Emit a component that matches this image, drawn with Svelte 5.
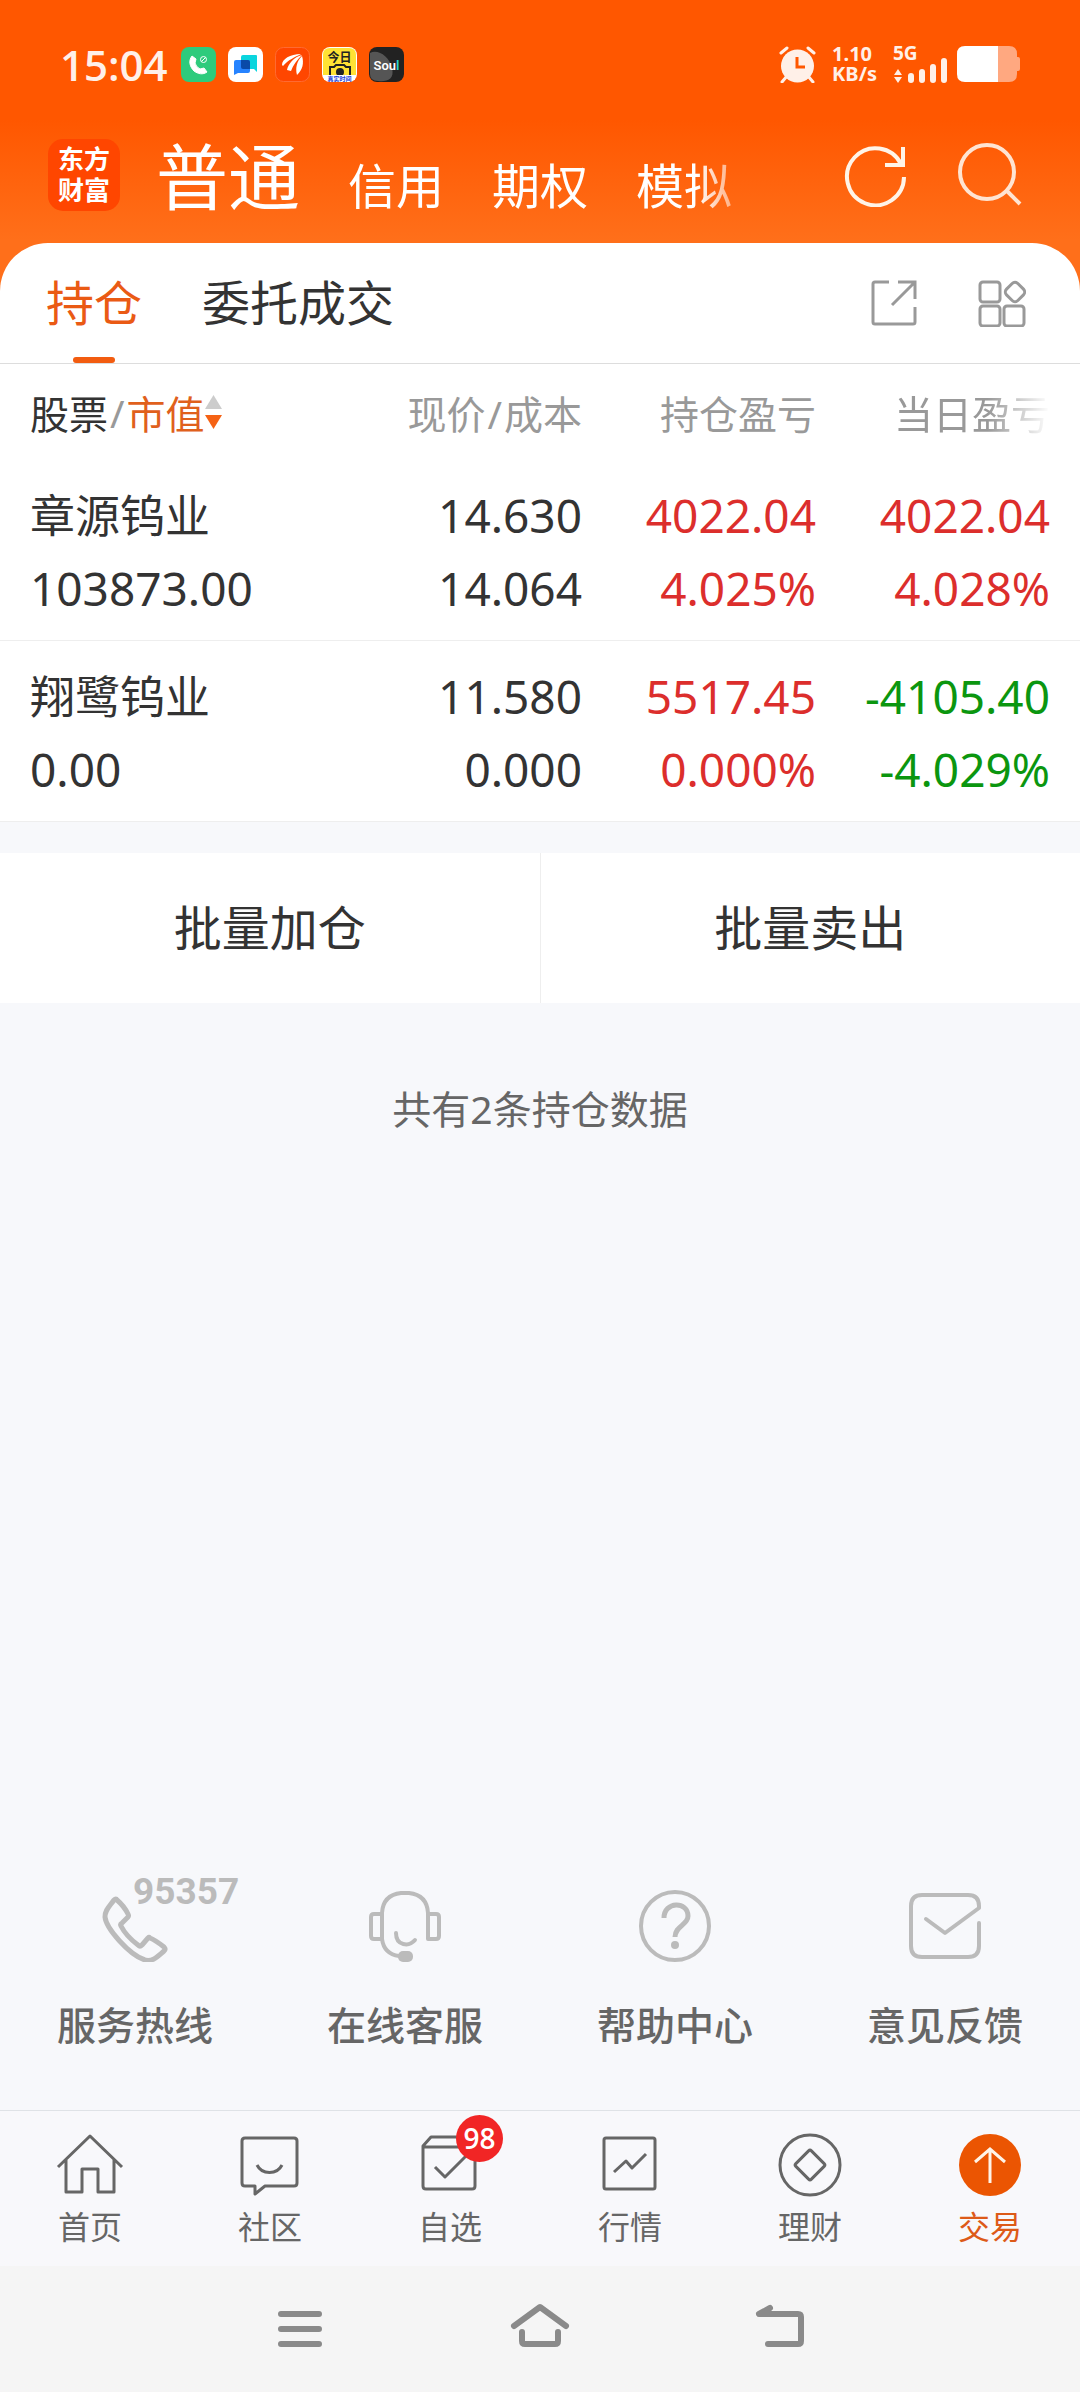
<script lang="ts">
  interface Holding {
    name: string;
    value: string;
    price: string;
    cost: string;
    profit: string;
    profitRate: string;
    dayProfit: string;
    dayRate: string;
  }

  const accounts = ["普通", "信用", "期权", "模拟"];
  const views = ["持仓", "委托成交"];

  const holdings: Holding[] = [
    {
      name: "章源钨业",
      value: "103873.00",
      price: "14.630",
      cost: "14.064",
      profit: "4022.04",
      profitRate: "4.025%",
      dayProfit: "4022.04",
      dayRate: "4.028%",
    },
    {
      name: "翔鹭钨业",
      value: "0.00",
      price: "11.580",
      cost: "0.000",
      profit: "5517.45",
      profitRate: "0.000%",
      dayProfit: "-4105.40",
      dayRate: "-4.029%",
    },
  ];

  const services = [
    { id: "phone", label: "服务热线" },
    { id: "agent", label: "在线客服" },
    { id: "help", label: "帮助中心" },
    { id: "mail", label: "意见反馈" },
  ];

  const tabs = [
    { id: "home", label: "首页", badge: 0 },
    { id: "community", label: "社区", badge: 0 },
    { id: "watchlist", label: "自选", badge: 98 },
    { id: "market", label: "行情", badge: 0 },
    { id: "wealth", label: "理财", badge: 0 },
    { id: "trade", label: "交易", badge: 0 },
  ];

  let account = $state("普通");
  let view = $state("持仓");
  let currentTab = $state("trade");
  let descending = $state(true);

  let sortedHoldings = $derived(
    [...holdings].sort((a, b) =>
      descending ? Number(b.value) - Number(a.value) : Number(a.value) - Number(b.value)
    )
  );

  function isLoss(amount: string) {
    return amount.startsWith("-");
  }
</script>

<div class="page">
  <header class="top">
    <div class="status">
      <time class="clock">15:04</time>
      <div class="apps">
        <svg viewBox="0 0 35 35" aria-hidden="true">
          <rect width="35" height="35" rx="8" fill="#2dcb7c" />
          <path d="M11 9c-4 5-2 11 2 15 4 3 9 4 13 1l-3-4-4 1q-4-2-5-6l1-4z" fill="#fff" stroke="#fff" stroke-linejoin="round" />
          <circle cx="22.500" cy="12.500" r="3" fill="none" stroke="#fff" />
          <path d="M20.500 14.500l4-4" stroke="#fff" />
        </svg>
        <svg viewBox="0 0 35 35" aria-hidden="true">
          <rect width="35" height="35" rx="8" fill="#fff" />
          <path d="M15 8h13q1 0 1 1v16l-3-3H15q-2 0-2-2V10q0-2 2-2z" fill="#0bd5de" />
          <path d="M8 13h12q2 0 2 2v9q0 2-2 2H10l-4 2V15q0-2 2-2z" fill="#2683ff" />
          <path d="M13 13h7q2 0 2 2v7h-7q-2 0-2-2z" fill="#0a4aa8" />
        </svg>
        <svg viewBox="0 0 35 35" aria-hidden="true">
          <rect x=".5" y=".5" width="34" height="34" rx="8" fill="#ff4600" stroke="#ff6a32" />
          <path d="M7 18C7 12 15 7 26 7 20 10 13 13 8 19z" fill="#fff" />
          <path d="M12 23c1-6 7-13 15-15-5 5-9 10-11 16z" fill="#fff" />
          <path d="M22 28c-2-7 0-14 5-19 2 7 1 13-5 19z" fill="#fff" />
        </svg>
        <svg viewBox="0 0 35 35" aria-hidden="true">
          <rect width="35" height="35" rx="8" fill="#fff" />
          <path d="M8 1h19q7 0 7 7v20H1V8q0-7 7-7z" fill="#ffe234" />
          <path d="M8 28v-8h4l2-2h8l2 2h4v8" fill="none" stroke="#222" stroke-width="2" />
          <circle cx="18" cy="25" r="4" fill="#222" />
          <text x="17.500" y="15" text-anchor="middle" font-size="12" font-weight="700" fill="#222">今日</text>
          <path d="M2 28h31v5H2z" fill="#fff" />
          <text x="17.500" y="34" text-anchor="middle" font-size="6" font-weight="700" fill="#1740d8">真实时间</text>
        </svg>
        <svg viewBox="0 0 35 35" aria-hidden="true">
          <rect width="35" height="35" rx="8" fill="#222" />
          <path d="M1 6C9 2 20 9 23 21s-6 14-14 13Q1 34 1 27z" fill="#555" />
          <text class="soul" x="17.500" y="23" text-anchor="middle" font-size="13" font-weight="600" fill="#fff">Sou<tspan fill="#25d4d0">l</tspan></text>
        </svg>
      </div>
      <svg class="alarm" viewBox="0 0 37 37" aria-hidden="true">
        <path d="M2 7l6-5M35 7l-6-5M8 30l-5 6M29 30l5 6" stroke="#fff0e8" stroke-width="3" stroke-linecap="round" />
        <circle cx="18.500" cy="20" r="16.500" fill="#fff0e8" />
        <path d="M18 11v10h8" fill="none" stroke="#ff5700" stroke-width="3" />
      </svg>
      <span class="speed">1.10<br />KB/s</span>
      <svg class="signal" viewBox="0 -8 54 53" aria-hidden="true">
        <text x="0" y="14" font-size="19" font-weight="700" fill="#fff0e8">5G</text>
        <path d="M5 23l4 6H1zM5 37l-4-6h8z" fill="#fff0e8" />
        <path d="M18 30v4M29 26v8M40 21v13M51 15v19" stroke="#fff0e8" stroke-width="6" stroke-linecap="round" />
      </svg>
      <svg class="battery" viewBox="0 0 63 36" aria-hidden="true">
        <path d="M40 0h12q8 0 8 8v3h1q2 0 2 2v10q0 2-2 2h-1v3q0 8-8 8H40z" fill="#ffa880" />
        <path d="M8 0h33v36H8q-8 0-8-8V8q0-8 8-8z" fill="#fff" />
      </svg>
    </div>

    <div class="titlebar">
      <span class="logo">东方<br />财富</span>
      <nav class="accounts">
        {#each accounts as name}
          <button class:current={name === account} onclick={() => (account = name)}>{name}</button>
        {/each}
      </nav>
      <button class="tool" aria-label="刷新">
        <svg viewBox="0 0 64 64" fill="none" stroke="#fff4e8" stroke-width="4">
          <path d="M60 34A28.500 28.500 0 1 1 57 21" />
          <path d="M59 4v18H41" />
        </svg>
      </button>
      <button class="tool" aria-label="搜索">
        <svg viewBox="0 0 64 64" fill="none" stroke="#ffe4d2" stroke-width="4">
          <circle cx="29" cy="29" r="27" />
          <path d="M48 47l14 14" />
        </svg>
      </button>
    </div>
  </header>

  <main>
    <section class="card">
      <div class="views">
        {#each views as name}
          <button class="view" class:current={name === view} onclick={() => (view = name)}>{name}</button>
        {/each}
        <button class="action" aria-label="分享">
          <svg viewBox="0 0 48 48" fill="none" stroke="#999" stroke-width="3">
            <path d="M19 3H5Q3 3 3 5v38q0 2 2 2h38q2 0 2-2V28" />
            <path d="M28 3h17v17M45 3L22 26" />
          </svg>
        </button>
        <button class="action" aria-label="更多功能">
          <svg viewBox="0 0 48 48" fill="none" stroke="#999" stroke-width="3">
            <rect x="2" y="3" width="20" height="20" rx="3" />
            <rect x="2" y="27" width="20" height="20" rx="3" />
            <rect x="26" y="27" width="20" height="20" rx="3" />
            <rect x="29" y="5" width="16" height="16" rx="4" transform="rotate(45 37 13)" />
          </svg>
        </button>
      </div>

      <table>
        <thead>
          <tr>
            <th class="first">
              <button class="sort" onclick={() => (descending = !descending)}>
                <span class="stock">股票</span><span class="slash">/</span><span class="value">市值</span>
                <svg viewBox="0 0 17 34" aria-hidden="true">
                  <path d="M8.500 0L17 14H0z" fill={descending ? "#ccc" : "#f56214"} />
                  <path d="M8.500 34L0 20h17z" fill={descending ? "#f56214" : "#ccc"} />
                </svg>
              </button>
            </th>
            <th>现价<span class="slash">/</span>成本</th>
            <th>持仓盈亏</th>
            <th class="last"><span class="fade">当日盈亏</span></th>
          </tr>
        </thead>
        <tbody>
          {#each sortedHoldings as item}
            <tr>
              <td class="first"><span class="name">{item.name}</span><br />{item.value}</td>
              <td>{item.price}<br />{item.cost}</td>
              <td class="gain" class:loss={isLoss(item.profit)}>{item.profit}<br />{item.profitRate}</td>
              <td class="last gain" class:loss={isLoss(item.dayProfit)}>{item.dayProfit}<br />{item.dayRate}</td>
            </tr>
          {/each}
        </tbody>
      </table>
    </section>

    <div class="batch">
      <button>批量加仓</button>
      <button>批量卖出</button>
    </div>

    <p class="summary">共有{holdings.length}条持仓数据</p>

    <div class="services">
      {#each services as service}
        <a href="#{service.id}">
          <span class="icon">
            <svg viewBox="0 0 72 72" fill="none" stroke="#bbb" stroke-width="5" stroke-linecap="round" stroke-linejoin="round" aria-hidden="true">
              {#if service.id === "phone"}
                <path d="M15 10C10 17 6 20 6 27c1 11 24 38 40 43 8 2 13-4 19-9q2-2 0-4c-5-4-9-7-14-9q-1-1-2 0l-6 7q-2 2-4 0Q27 46 22 36q-1-2 1-3l6-6q1-1 0-3-4-8-11-14-1-2-3 0z" />
              {:else if service.id === "agent"}
                <path d="M13 49V23Q14 5 32 3h8q18 2 19 20v26h8q3 0 3-3V27q0-3-3-3h-8M13 24H5q-3 0-3 3v19q0 3 3 3h8q2 15 17 17" stroke-width="4" />
                <path d="M27 43c0 13 13 14 19 7" stroke-width="4" />
                <rect x="29" y="61" width="15" height="11" rx="5" fill="#bbb" stroke="none" />
              {:else if service.id === "help"}
                <circle cx="36" cy="36" r="34" stroke-width="4" />
                <path d="M25 28c0-17 24-17 24-2 0 9-13 10-13 21" stroke-linecap="butt" />
                <circle cx="36" cy="55" r="4" fill="#bbb" stroke="none" />
              {:else}
                <path d="M17 29l19 14 34-25v-2Q70 5 59 5H13Q2 5 2 16v40q0 11 11 11h46q11 0 11-11V33" stroke-width="4" />
              {/if}
            </svg>
            {#if service.id === "phone"}
              <span class="hotline">95357</span>
            {/if}
          </span>
          {service.label}
        </a>
      {/each}
    </div>
  </main>

  <nav class="tabbar">
    {#each tabs as tab}
      <button class:current={tab.id === currentTab} onclick={() => (currentTab = tab.id)}>
        <span class="icon">
          <svg viewBox="0 0 72 72" fill="none" stroke="#666" stroke-width="3" stroke-linejoin="round" aria-hidden="true">
            {#if tab.id === "home"}
              <path d="M4 38L36 7l32 31M12 31v32h16V40h16v23h16V31" />
            {:else if tab.id === "community"}
              <path d="M11 9h49q3 0 3 3v42q0 3-3 3H31l-10 8v-8H11q-3 0-3-3V12q0-3 3-3z" />
              <path d="M23 36c5 10 20 10 25 0" />
            {:else if tab.id === "watchlist"}
              <path d="M9 18h52v39q0 3-3 3H12q-3 0-3-3V17l8-9h36l8 9v1" />
              <path d="M21 38l10 10 23-23" />
            {:else if tab.id === "market"}
              <rect x="10" y="9" width="51" height="51" rx="2" />
              <path d="M20 43l12-11 6 7 14-14" />
            {:else if tab.id === "wealth"}
              <circle cx="36" cy="36" r="30" />
              <rect x="25" y="25" width="22" height="22" rx="2" transform="rotate(45 36 36)" />
            {:else}
              <circle cx="36" cy="36" r="31" fill="#eb5502" stroke="none" />
              <path d="M36 20v34M21 33l15-13 15 13" stroke="#fff4e8" stroke-linejoin="miter" />
            {/if}
          </svg>
          {#if tab.badge}
            <span class="badge">{tab.badge}</span>
          {/if}
        </span>
        {tab.label}
      </button>
    {/each}
  </nav>

  <div class="system">
    <button aria-label="最近任务">
      <svg viewBox="0 0 60 60"><path d="M11 16h38M11 31h38M11 46h38" /></svg>
    </button>
    <button aria-label="主屏幕">
      <svg viewBox="0 0 60 60"><path d="M4 28L30 9l26 19M12 34v9q0 3 3 3h30q3 0 3-3v-9" /></svg>
    </button>
    <button aria-label="返回">
      <svg viewBox="0 0 60 60"><path d="M20 10L9 16h39q3 0 3 3v24q0 3-3 3H18" /></svg>
    </button>
  </div>
</div>

<style>
  :global(body) {
    margin: 0;
  }

  .page {
    display: flex;
    flex-direction: column;
    min-height: 100vh;
    background: #f7f8fb;
    color: #333;
    font-family: "Noto Sans", "Noto Sans CJK SC", sans-serif;
  }

  button {
    padding: 0;
    border: 0;
    background: none;
    color: inherit;
    font: inherit;
    cursor: pointer;
  }

  svg {
    display: block;
    flex: none;
  }

  .top {
    /* runs on behind the rounded corners of the card */
    margin-bottom: -48px;
    padding-bottom: 48px;
    background: linear-gradient(#ff5700 120px, #ff6f1a 240px);
    color: #fff;
  }

  .status {
    display: flex;
    align-items: center;
    height: 128px;
    padding: 0 60px;
  }

  .clock {
    color: #fff0e8;
    font-family: "Open Sans", sans-serif;
    font-size: 42px;
    font-weight: 600;
  }

  .apps {
    display: flex;
    flex: 1;
    gap: 12px;
    margin-left: 13px;
  }

  .apps svg {
    width: 35px;
    height: 35px;
  }

  .soul {
    font-family: Roboto, sans-serif;
  }

  .alarm {
    width: 37px;
    height: 37px;
  }

  .speed {
    margin: 0 16px;
    color: #fff0e8;
    font-size: 20px;
    font-weight: 700;
    line-height: 20px;
  }

  .signal {
    width: 54px;
    height: 53px;
  }

  .battery {
    width: 63px;
    height: 36px;
    margin-left: 10px;
  }

  .titlebar {
    display: flex;
    align-items: center;
    height: 94px;
    padding: 0 58px 21px 48px;
  }

  .logo {
    width: 72px;
    padding: 5px 0;
    border-radius: 15px;
    background: #ff4600;
    font-size: 26px;
    font-weight: 700;
    line-height: 31px;
    text-align: center;
  }

  .accounts {
    display: flex;
    flex: 1;
    align-items: baseline;
    gap: 48px;
    margin-left: 36px;
    padding-top: 12px;
    -webkit-mask-image: linear-gradient(90deg, #000 540px, transparent 610px);
    mask-image: linear-gradient(90deg, #000 540px, transparent 610px);
  }

  .accounts button {
    font-size: 48px;
    line-height: 96px;
  }

  .accounts button.current {
    font-size: 72px;
  }

  .tool {
    margin-left: 50px;
  }

  .tool svg {
    width: 64px;
    height: 64px;
  }

  main {
    display: flex;
    flex: 1;
    flex-direction: column;
  }

  .card {
    border-radius: 48px 48px 0 0;
    background: #fff;
  }

  .views {
    display: flex;
    align-items: center;
    gap: 60px;
    height: 120px;
    padding: 0 54px 0 46px;
    border-bottom: 1px solid #ddd;
  }

  .view {
    position: relative;
    font-size: 48px;
    line-height: 120px;
  }

  .view.current {
    color: #ea5a14;
  }

  .view.current::after {
    position: absolute;
    bottom: 0;
    left: 50%;
    width: 42px;
    height: 6px;
    margin-left: -21px;
    border-radius: 3px;
    background: #f25c10;
    content: "";
  }

  .action svg {
    width: 48px;
    height: 48px;
  }

  .view + .action {
    margin-left: auto;
  }

  table {
    width: 100%;
    border-collapse: collapse;
    table-layout: fixed;
  }

  th {
    width: 234px;
    height: 96px;
    padding: 0;
    color: #999;
    font-size: 39px;
    font-weight: 400;
    text-align: right;
  }

  td {
    padding: 19px 0 15px;
    border-bottom: 1px solid #eee;
    font-size: 46px;
    line-height: 73px;
    text-align: right;
  }

  .first {
    width: auto;
    padding-left: 30px;
    text-align: left;
  }

  .last {
    padding-right: 30px;
  }

  .name {
    font-size: 45px;
  }

  .gain {
    color: #dc2e2c;
  }

  .loss {
    color: #0b960f;
  }

  .sort {
    display: flex;
    align-items: center;
  }

  .sort svg {
    width: 17px;
    height: 34px;
  }

  .slash {
    padding: 0 2px;
  }

  .stock {
    color: #333;
  }

  .value {
    color: #e0601c;
  }

  .fade {
    -webkit-mask-image: linear-gradient(90deg, #000 60%, transparent);
    mask-image: linear-gradient(90deg, #000 60%, transparent);
  }

  .batch {
    display: flex;
    margin-top: 31px;
    background: #fff;
  }

  .batch button {
    flex: 1;
    font-size: 48px;
    line-height: 150px;
  }

  .batch button + button {
    border-left: 1px solid #eee;
  }

  .summary {
    margin: 77px 0;
    color: #666;
    font-size: 39px;
    line-height: 58px;
    text-align: center;
  }

  .services {
    display: grid;
    grid-template-columns: repeat(4, 1fr);
    margin-top: auto;
    padding-bottom: 55px;
  }

  .services a {
    display: flex;
    flex-direction: column;
    align-items: center;
    gap: 33px;
    color: #666;
    font-size: 39px;
    font-weight: 500;
    line-height: 60px;
    text-decoration: none;
  }

  .icon {
    position: relative;
  }

  .icon svg {
    width: 72px;
    height: 72px;
  }

  .hotline {
    position: absolute;
    top: -20px;
    left: 34px;
    color: #bbb;
    font-family: Roboto, sans-serif;
    font-size: 37px;
    font-weight: 700;
    line-height: 44px;
  }

  .tabbar {
    display: grid;
    grid-template-columns: repeat(6, 1fr);
    border-top: 1px solid #dfe2e6;
    background: #f8f8fb;
  }

  .tabbar button {
    display: flex;
    flex-direction: column;
    align-items: center;
    gap: 2px;
    padding: 18px 0 15px;
    color: #666;
    font-size: 32px;
    line-height: 48px;
  }

  .tabbar button.current {
    color: #dd5a18;
  }

  .badge {
    position: absolute;
    top: -14px;
    left: 42px;
    width: 47px;
    border-radius: 50%;
    background: #f12525;
    color: #fff;
    font-family: "Open Sans", sans-serif;
    font-size: 28px;
    font-weight: 600;
    line-height: 47px;
    text-align: center;
  }

  .system {
    display: grid;
    grid-template-columns: repeat(3, 240px);
    justify-content: center;
    background: #f5f5f5;
  }

  .system button {
    display: flex;
    justify-content: center;
    padding: 32px 0 34px;
  }

  .system svg {
    width: 60px;
    height: 60px;
    fill: none;
    stroke: #8a8a8a;
    stroke-width: 6;
    stroke-linecap: round;
    stroke-linejoin: round;
  }
</style>
